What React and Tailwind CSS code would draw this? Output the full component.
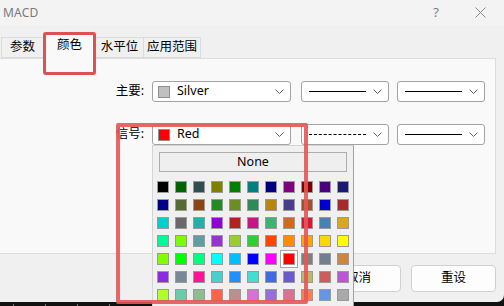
import React from "react";

const PALETTE = [
  ["#000000", "#006400", "#2F4F4F", "#808000", "#008000", "#008080", "#000080", "#800080", "#800000", "#4B0082", "#191970"],
  ["#00008B", "#556B2F", "#8B4513", "#228B22", "#6B8E23", "#2E8B57", "#B8860B", "#483D8B", "#A0522D", "#0000CD", "#A52A2A"],
  ["#00CED1", "#696969", "#20B2AA", "#9400D3", "#B22222", "#C71585", "#3CB371", "#D2691E", "#DC143C", "#4682B4", "#DAA520"],
  ["#00FA9A", "#7CFC00", "#5F9EA0", "#9932CC", "#9ACD32", "#32CD32", "#FF4500", "#FF8C00", "#FFA500", "#FFD700", "#FFFF00"],
  ["#7FFF00", "#00FF00", "#00FF7F", "#00FFFF", "#00BFFF", "#0000FF", "#FF00FF", "#FF0000", "#808080", "#708090", "#CD853F"],
  ["#8A2BE2", "#778899", "#FF1493", "#48D1CC", "#1E90FF", "#40E0D0", "#4169E1", "#6A5ACD", "#BDB76B", "#CD5C5C", "#BA55D3"],
  ["#ADFF2F", "#66CDAA", "#8FBC8F", "#FF6347", "#BC8F8F", "#DA70D6", "#9370DB", "#DB7093", "#FF7F50", "#6495ED", "#A9A9A9"],
];

const TABS = [
  { label: "参数", w: "w-[43px]" },
  { label: "颜色", w: "w-[53px]", active: true },
  { label: "水平位", w: "w-[49px]" },
  { label: "应用范围", w: "w-[58px]" },
];

function Chevron() {
  return (
    <svg width="9" height="6" viewBox="0 0 9 6" className="shrink-0">
      <polyline points="0.5,0.5 4.5,4.5 8.5,0.5" fill="none" stroke="#606060" strokeWidth="1" />
    </svg>
  );
}

// colour dropdown (swatch + name)
function ColorSelect({ color, name }) {
  return (
    <div className="w-[139px] h-[21px] border border-[#a3a3a3] rounded-[3px] bg-white flex items-center pl-[5px] pr-[6px]">
      <div className="w-[12px] h-[12px] border border-[#8f8f8f]" style={{ backgroundColor: color }} />
      <span className="ml-[7px] flex-1 text-[12.5px] text-black">{name}</span>
      <Chevron />
    </div>
  );
}

// line style dropdown
function LineSelect({ dashed }) {
  return (
    <div className="w-[88px] h-[21px] border border-[#a3a3a3] rounded-[3px] bg-white flex items-center pl-[7px] pr-[6px]">
      <div className={dashed ? "w-[57px] border-t border-dashed border-black" : "w-[57px] h-[1.5px] bg-black"} />
      <div className="flex-1" />
      <Chevron />
    </div>
  );
}

export default function App() {
  return (
    <div className="relative w-[504px] h-[306px] overflow-hidden bg-[#111] font-['Segoe_UI','Noto_Sans','Noto_Sans_CJK_SC',sans-serif] text-[12px] text-black">
      {/* window */}
      <div className="w-[504px] h-[302px] bg-[#f0f0f0] rounded-br-[7px] flex flex-col">
        {/* title bar */}
        <div className="h-[25px] bg-[#f3f3f3] flex items-center pl-[3px] pr-[18px] text-[#7a7a7a]">
          <span className="text-[12px] tracking-[0.2px]">MACD</span>
          <div className="flex-1" />
          <span className="text-[13px] mr-[36px]">?</span>
          <svg width="11" height="11" viewBox="0 0 11 11">
            <path d="M0.5 0.5 L10.5 10.5 M10.5 0.5 L0.5 10.5" stroke="#8a8a8a" strokeWidth="1" />
          </svg>
        </div>

        {/* tabs */}
        <div className="h-[33px] flex items-end pl-[1px] relative z-10">
          {TABS.map((t) =>
            t.active ? (
              <div
                key={t.label}
                className={`${t.w} h-[27px] -mb-px -ml-px bg-[#f9f9f9] border border-b-0 border-[#dcdcdc] flex justify-center items-start pt-[3px] text-[12.5px]`}
              >
                {t.label}
              </div>
            ) : (
              <div
                key={t.label}
                className={`${t.w} h-[21px] bg-[#f0f0f0] border border-[#dcdcdc] -ml-px first:ml-0 flex justify-center items-center text-[12.5px]`}
              >
                {t.label}
              </div>
            )
          )}
        </div>

        {/* tab panel */}
        <div className="w-[496px] h-[196px] bg-[#f9f9f9] border border-l-0 border-[#dcdcdc] pt-[22px] flex flex-col gap-[22px]">
          <div className="flex items-center">
            <span className="w-[144px] text-right text-[12.5px]">主要:</span>
            <div className="ml-[8px] flex gap-[10px]">
              <ColorSelect color="#C0C0C0" name="Silver" />
              <div className="flex gap-[8px]">
                <LineSelect />
                <LineSelect />
              </div>
            </div>
          </div>
          <div className="flex items-center">
            <span className="w-[144px] text-right text-[12.5px]">信号:</span>
            <div className="ml-[8px] flex gap-[10px]">
              <ColorSelect color="#FF0000" name="Red" />
              <div className="flex gap-[8px]">
                <LineSelect dashed />
                <LineSelect />
              </div>
            </div>
          </div>
        </div>

        {/* buttons */}
        <div className="flex justify-end gap-[10px] pr-[8px] pt-[11px]">
          <button className="w-[85px] h-[27px] rounded-[4px] border border-[#d0d0d0] bg-[#fdfdfd] text-[12.5px]">取消</button>
          <button className="w-[85px] h-[27px] rounded-[4px] border border-[#d0d0d0] bg-[#fdfdfd] text-[12.5px]">重设</button>
        </div>
      </div>

      {/* desktop tick marks under the window */}
      <div className="absolute left-0 bottom-0 w-[152px] h-[4px] flex gap-[31px] pl-[13px]">
        {[0, 1, 2, 3].map((i) => (
          <div key={i} className="w-px h-[2px] mt-[2px] bg-[#777]" />
        ))}
      </div>

      {/* colour popup */}
      <div className="absolute left-[152px] top-[145px] w-[202px] h-[170px] bg-[#f0f0f0] border border-[#d4d4d4] border-r-[#a0a0a0] z-20">
        <div className="ml-[6px] mt-[6px] w-[188px] h-[20px] border border-[#adadad] bg-[#efefef] flex items-center justify-center text-[12.5px]">
          None
        </div>
        <div className="mt-[6px] ml-[1px] flex flex-col">
          {PALETTE.map((row, r) => (
            <div key={r} className="flex">
              {row.map((c) => (
                <div
                  key={c}
                  className={
                    c === "#FF0000"
                      ? "w-[18px] h-[18px] flex items-center justify-center bg-white border border-[#a8a8a8]"
                      : "w-[18px] h-[18px] flex items-center justify-center"
                  }
                >
                  <div className="w-[12px] h-[12px] border border-[#9a9a9a]" style={{ backgroundColor: c }} />
                </div>
              ))}
            </div>
          ))}
        </div>
      </div>

      {/* annotation boxes */}
      <div className="absolute left-[43px] top-[32px] w-[53px] h-[43px] border-[3px] border-[#e05050] rounded-[3px] z-30" />
      <div className="absolute left-[116px] top-[123px] w-[192px] h-[181px] border-4 border-[#e45656]/90 rounded-[2px] z-30" />
    </div>
  );
}
